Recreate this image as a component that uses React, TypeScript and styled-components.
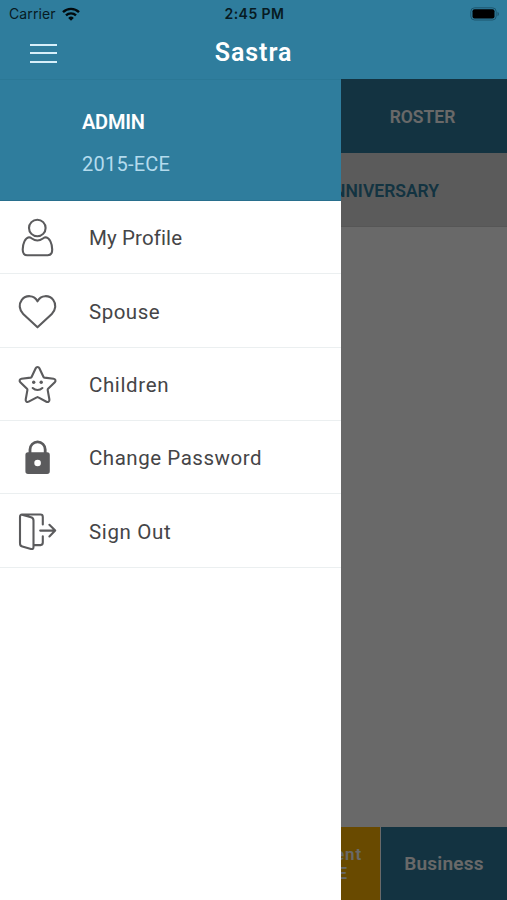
import React from 'react';
import styled, { createGlobalStyle } from 'styled-components';

const GlobalStyle = createGlobalStyle`
  * { box-sizing: border-box; }
  html, body { margin: 0; padding: 0; }
  body { font-family: Roboto, "Liberation Sans", sans-serif; }
`;

const Screen = styled.div`
  width: 507px;
  height: 900px;
  display: flex;
  flex-direction: column;
  overflow: hidden;
  background: #fff;
`;

const Header = styled.header`
  flex: 0 0 79px;
  background: #2f7d9d;
`;

const StatusBar = styled.div`
  height: 27px;
  display: grid;
  grid-template-columns: 1fr auto 1fr;
  align-items: center;
  padding: 0 7px 0 9px;
  font-family: Inter, "Liberation Sans", sans-serif;
  font-size: 14px;
  color: #071a22;
`;

const Carrier = styled.div`
  display: flex;
  align-items: center;
  gap: 6px;
  letter-spacing: 0.12px;
`;

const Clock = styled.div`
  font-weight: 600;
  letter-spacing: 0.45px;
`;

const Battery = styled.div`
  justify-self: end;
  display: flex;
`;

const NavBar = styled.div`
  height: 52px;
  display: grid;
  grid-template-columns: 1fr auto 1fr;
  align-items: center;
  padding: 0 30px;
`;

const MenuButton = styled.button`
  width: 27px;
  height: 19px;
  padding: 0;
  border: 0;
  background: none;
  display: flex;
  flex-direction: column;
  justify-content: space-between;
`;

const MenuLine = styled.span`
  height: 2px;
  background: #d7effa;
`;

const Title = styled.h1`
  margin: 0;
  font-size: 25px;
  line-height: 30px;
  font-weight: 600;
  letter-spacing: 0.95px;
  color: #fff;
`;

const Main = styled.main`
  flex: 1;
  position: relative;
  display: flex;
  flex-direction: column;
`;

const Tabs = styled.nav<{ $light?: boolean }>`
  height: 74px;
  display: grid;
  grid-auto-flow: column;
  grid-auto-columns: 1fr;
  background: ${p => (p.$light ? '#dedede' : '#2f7d9d')};
  color: ${p => (p.$light ? '#2f7d9d' : '#fff')};
  border-bottom: 1px solid ${p => (p.$light ? '#d0d0d0' : '#2f7d9d')};
`;

const Tab = styled.div`
  display: flex;
  align-items: center;
  justify-content: center;
  padding-top: 2px;
  font-size: 17.5px;
  font-weight: 600;
`;

const Content = styled.div`
  flex: 1;
`;

const Footer = styled.footer`
  height: 73px;
  display: grid;
  grid-template-columns: repeat(4, 1fr);
  column-gap: 1px;
`;

const FooterTab = styled.div<{ $tone: string; $small?: boolean }>`
  display: flex;
  align-items: center;
  justify-content: center;
  text-align: center;
  background: ${p => p.$tone};
  color: #fff;
  font-size: ${p => (p.$small ? 17 : 19)}px;
  line-height: 19px;
  font-weight: 600;
  letter-spacing: ${p => (p.$small ? 1 : 0.25)}px;
`;

const Scrim = styled.div`
  position: absolute;
  inset: 0;
  background: rgba(0, 0, 0, 0.59);
`;

const Drawer = styled.aside`
  position: absolute;
  top: 0;
  bottom: 0;
  left: 0;
  width: 340.6px;
  background: #fff;
`;

const Profile = styled.div`
  height: 122px;
  padding: 29px 0 0 82px;
  background: #2f7d9d;
  border-top: 1px solid #2b7896;
  border-bottom: 1px solid #286f8d;
`;

const Name = styled.div`
  font-size: 20px;
  line-height: 26px;
  font-weight: 600;
  letter-spacing: -0.25px;
  color: #fff;
`;

const Batch = styled.div`
  margin-top: 16px;
  font-size: 20px;
  line-height: 26px;
  letter-spacing: 0.25px;
  color: #b4dbed;
`;

const Item = styled.div`
  height: 73.35px;
  display: flex;
  align-items: center;
  padding: 2px 0 0 17px;
  border-bottom: 1px solid #ebeff0;
`;

const Icon = styled.svg`
  width: 42px;
  height: 42px;
  flex: none;
  margin-right: 30px;
  fill: none;
  stroke: #5b5b5d;
  stroke-width: 2.1;
  stroke-linecap: round;
  stroke-linejoin: round;
`;

const Label = styled.span<{ $spacing: number }>`
  font-size: 20.5px;
  line-height: 26px;
  color: #454547;
  white-space: nowrap;
  letter-spacing: ${p => p.$spacing}px;
`;

const items = [
  {
    label: 'My Profile',
    spacing: 0.12,
    icon: (
      <>
        <circle cx="20.3" cy="11" r="8.3" />
        <path d="M12 20.3c1 0 1.9.5 2.9 1.2 3.3 2.4 7.7 2.4 11 0 1-.7 1.9-1.2 2.9-1.2 3.8.6 6.4 6.2 6.4 12.3 0 3.7-1.6 5.7-4.5 5.7H10.2c-2.9 0-4.5-2-4.5-5.7 0-6.1 2.5-11.7 6.3-12.3Z" />
      </>
    ),
  },
  {
    label: 'Spouse',
    spacing: 0.5,
    icon: <path d="M20.5 36.3 6.2 22.9C2.1 18.9 1.6 13.1 4.8 8.9 8.7 3.9 17.2 3.5 20.5 10.4 23.8 3.5 32.3 3.9 36.2 8.9c3.2 4.2 2.7 10-1.4 14Z" />,
  },
  {
    label: 'Children',
    spacing: 0.62,
    icon: (
      <>
        <path d="M18.7 4.2c.8-1.7 2.9-1.7 3.7 0l4 8.6c.2.5.6.7 1.1.8l9.1 1.2c1.9.3 2.5 2.2 1.2 3.5l-6.7 6.5c-.4.4-.5.8-.4 1.3l1.7 9.4c.3 1.9-1.3 3.1-3 2.2l-8.1-4.4c-.5-.3-1-.3-1.5 0l-8.1 4.4c-1.7.9-3.3-.3-3-2.2l1.7-9.4c.1-.5 0-.9-.4-1.3l-6.7-6.5c-1.3-1.3-.7-3.2 1.2-3.5l9.1-1.2c.5-.1.9-.3 1.1-.8Z" />
        <path d="M15.7 24c2.7 2.7 7 2.7 9.7 0" />
        <g fill="#5b5b5d" stroke="none">
          <circle cx="16.7" cy="18.3" r="1.7" />
          <circle cx="24.2" cy="18.3" r="1.7" />
        </g>
      </>
    ),
  },
  {
    label: 'Change Password',
    spacing: 0.53,
    icon: (
      <>
        <path strokeWidth="2.8" d="M13 17v-4.5a7.6 7.6 0 0 1 15.2 0V17" />
        <path
          fill="#5b5b5d"
          stroke="none"
          fillRule="evenodd"
          d="M11 15.3h19.2a2.6 2.6 0 0 1 2.6 2.6v16.4a2.6 2.6 0 0 1-2.6 2.6H11a2.6 2.6 0 0 1-2.6-2.6V17.9a2.6 2.6 0 0 1 2.6-2.6Zm9.6 7.4a3.3 3.3 0 1 0 0 6.6 3.3 3.3 0 0 0 0-6.6Z"
        />
      </>
    ),
  },
  {
    label: 'Sign Out',
    spacing: 0.65,
    icon: (
      <>
        <path d="M5 3.8 14 6.2c1.9.5 2.5 1.4 2.5 3.3v26.2c0 2-.7 2.7-2.5 2.2L5.3 35.5C3.5 35 3 34.2 3 32.4V6c0-1.9.4-2.5 2-2.5h18.5c1.8 0 2.3.6 2.3 2.4v7.6M25.8 25.3v6.3c0 1.9-.5 2.5-2.3 2.5h-6.7M23.2 19.6h14.5M32.4 13.8l5.8 5.8-5.8 5.8" />
      </>
    ),
  },
];

export default function App() {
  return (
    <Screen>
      <GlobalStyle />
      <Header>
        <StatusBar>
          <Carrier>
            Carrier
            <svg width="18" height="14" viewBox="0 0 18 14" fill="none" stroke="#020a0d" strokeWidth="2.4">
              <path d="M1 5.2a11.4 11.4 0 0 1 16 0M4 8.4a7.2 7.2 0 0 1 10 0" />
              <path d="M9 13.7 6.2 10.9a4 4 0 0 1 5.6 0Z" fill="#020a0d" stroke="none" />
            </svg>
          </Carrier>
          <Clock>2:45 PM</Clock>
          <Battery>
            <svg width="30" height="14" viewBox="0 0 30 14">
              <rect x=".8" y=".8" width="25.4" height="12.2" rx="3.8" fill="none" stroke="#1d566e" strokeWidth="1" />
              <rect x="2.5" y="2.3" width="22" height="9.2" rx="2" fill="#000" />
              <path d="M27.5 4.8c2 .8 2 3.6 0 4.4Z" fill="#1d566e" />
            </svg>
          </Battery>
        </StatusBar>
        <NavBar>
          <MenuButton aria-label="Menu">
            <MenuLine />
            <MenuLine />
            <MenuLine />
          </MenuButton>
          <Title>Sastra</Title>
        </NavBar>
      </Header>
      <Main>
        <Tabs>
          <Tab />
          <Tab />
          <Tab>ROSTER</Tab>
        </Tabs>
        <Tabs $light>
          <Tab />
          <Tab>ANNIVERSARY</Tab>
        </Tabs>
        <Content />
        <Footer>
          <FooterTab $tone="#2f7d9d" />
          <FooterTab $tone="#2f7d9d" />
          <FooterTab $tone="#ffb400" $small>
            Placement
            <br />
            OFFICE
          </FooterTab>
          <FooterTab $tone="#2f7d9d">Business</FooterTab>
        </Footer>
        <Scrim />
        <Drawer>
          <Profile>
            <Name>ADMIN</Name>
            <Batch>2015-ECE</Batch>
          </Profile>
          {items.map(item => (
            <Item key={item.label}>
              <Icon viewBox="0 0 42 42">{item.icon}</Icon>
              <Label $spacing={item.spacing}>{item.label}</Label>
            </Item>
          ))}
        </Drawer>
      </Main>
    </Screen>
  );
}
